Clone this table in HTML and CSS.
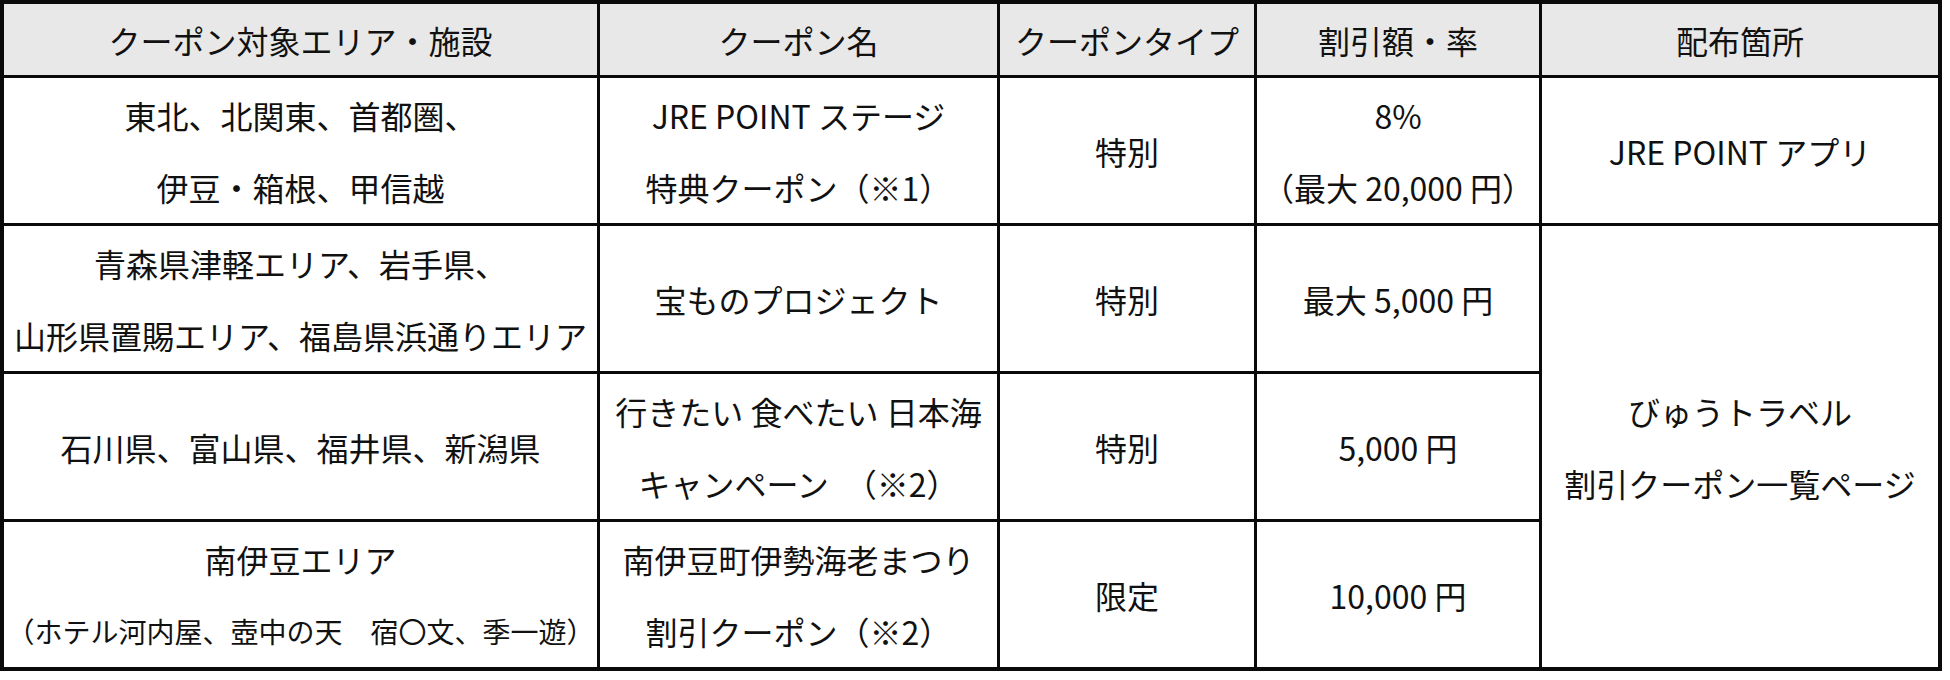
FILE: index.html
```html
<!DOCTYPE html>
<html lang="ja">
<head>
<meta charset="utf-8">
<title>クーポン一覧</title>
<link rel="stylesheet" href="styles.css">
</head>
<body>
<div class="coupon-table">
  <div class="cell head">クーポン対象エリア・施設</div>
  <div class="cell head">クーポン名</div>
  <div class="cell head">クーポンタイプ</div>
  <div class="cell head">割引額・率</div>
  <div class="cell head">配布箇所</div>

  <div class="cell"><span>東北、北関東、首都圏、</span><span>伊豆・箱根、甲信越</span></div>
  <div class="cell"><span>JRE POINT ステージ</span><span>特典クーポン（※1）</span></div>
  <div class="cell">特別</div>
  <div class="cell"><span>8%</span><span>（最大 20,000 円）</span></div>
  <div class="cell">JRE POINT アプリ</div>

  <div class="cell"><span>青森県津軽エリア、岩手県、</span><span>山形県置賜エリア、福島県浜通りエリア</span></div>
  <div class="cell">宝ものプロジェクト</div>
  <div class="cell">特別</div>
  <div class="cell">最大 5,000 円</div>
  <div class="cell span3"><span>びゅうトラベル</span><span>割引クーポン一覧ページ</span></div>

  <div class="cell">石川県、富山県、福井県、新潟県</div>
  <div class="cell"><span>行きたい 食べたい 日本海</span><span>キャンペーン　（※2）</span></div>
  <div class="cell">特別</div>
  <div class="cell">5,000 円</div>

  <div class="cell"><span>南伊豆エリア</span><span class="small">（ホテル河内屋、壺中の天　宿〇文、季一遊）</span></div>
  <div class="cell"><span>南伊豆町伊勢海老まつり</span><span>割引クーポン（※2）</span></div>
  <div class="cell">限定</div>
  <div class="cell">10,000 円</div>
</div>
</body>
</html>
```

FILE: styles.css
```css
html, body {
  margin: 0;
  padding: 0;
  background: #ffffff;
}

body {
  font-family: "Noto Sans CJK JP", "Noto Sans", sans-serif;
  color: #111111;
}

.coupon-table {
  display: grid;
  grid-template-columns: 593px 397px 254px 282px 396px;
  grid-template-rows: 71px 145px 145px 145px 145px;
  gap: 3px;
  padding: 4px;
  width: max-content;
  background: #0a0a0a;
}

.cell {
  background: #ffffff;
  display: flex;
  flex-direction: column;
  align-items: center;
  justify-content: center;
  font-size: 32px;
  line-height: 72px;
  white-space: nowrap;
  overflow: hidden;
}

.cell.head {
  background: #e8e8e8;
  line-height: 40px;
}

.cell.span3 {
  grid-column: 5;
  grid-row: 3 / span 3;
}

.small {
  font-size: 28px;
}
```
